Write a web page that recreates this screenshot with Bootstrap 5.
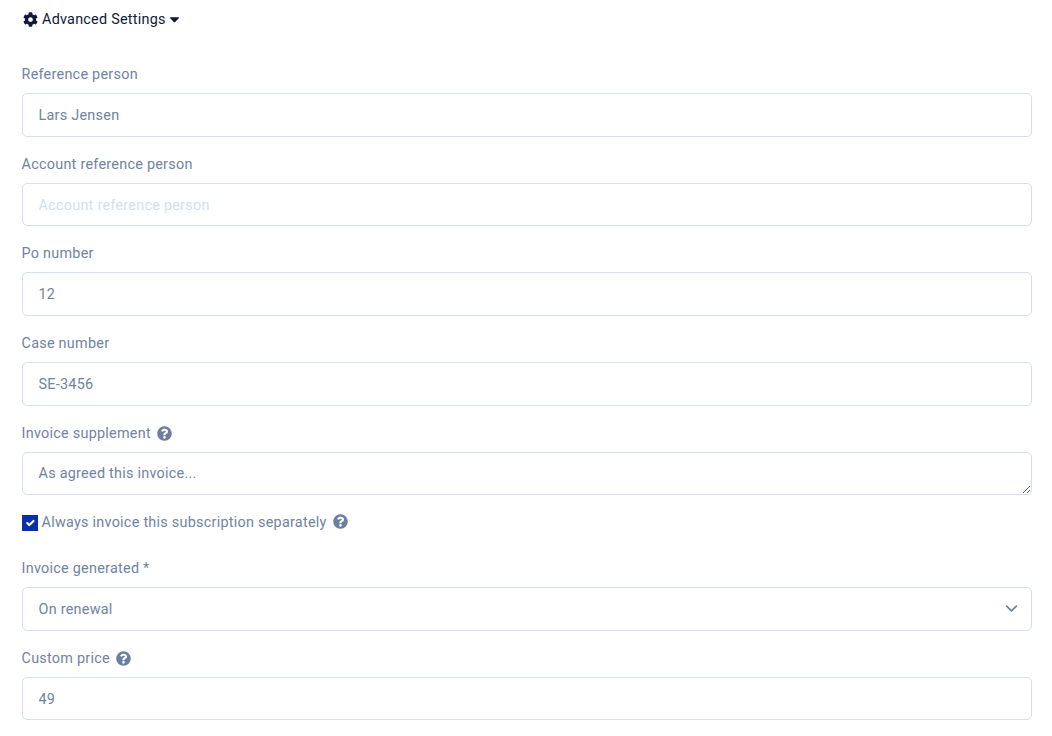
<!DOCTYPE html>
<html lang="en">
<head>
<meta charset="utf-8">
<title>Advanced Settings</title>
<link href="https://cdn.jsdelivr.net/npm/bootstrap@5.3.0/dist/css/bootstrap.min.css" rel="stylesheet">
<style>
html, body { height: 736px; overflow: hidden; }
body { font-family: Roboto, "Liberation Sans", sans-serif; font-size: 14.4px; color: #6f83a3; background: #fff; }
.page-wrap { padding: 9.08px 20px 0 22px; }
.adv-toggle { color: #12193a; font-size: 14.4px; line-height: 21.6px; margin-bottom: 33px; letter-spacing: .24px; }
.adv-toggle svg { display: block; }
.adv-gear { margin-left: .5px; margin-right: 4.500px; margin-top: -1px; }
.adv-caret { margin-left: 4px; }
.field-block { margin-bottom: 16.4px; }
.field-label { color: #6f83a3; font-size: 14.4px; line-height: 21.6px; padding-top: .4px; margin-bottom: 7.6px; margin-left: -.5px; letter-spacing: .26px; column-gap: 6px; }
.field-label.d-flex { padding-top: 1px; margin-bottom: 7px; }
.field-ctl.form-control, .field-ctl.form-select { font-size: 14.4px; line-height: 21.6px; color: #6f83a3; padding: 11px 16px 9px 15.5px; border: 1px solid #d3dfec; border-radius: 5px; letter-spacing: .26px; }
.field-ctl::placeholder { color: #d3dfec; opacity: 1; }
textarea.field-ctl.form-control { min-height: 43.6px; height: 43.6px; display: block; padding-top: 10px; padding-bottom: 10px; }
.field-ctl.form-select { background-image: url("data:image/svg+xml,%3csvg xmlns='http://www.w3.org/2000/svg' viewBox='0 0 16 16'%3e%3cpath fill='none' stroke='%236b7fa0' stroke-linecap='round' stroke-linejoin='round' stroke-width='2' d='m2 5 6 6 6-6'/%3e%3c/svg%3e"); background-size: 13px 13px; background-position: right 13px center; }
.help-icon { color: #6b7fa0; flex: none; }
.check-row { margin-bottom: 24.3px; line-height: 21.6px; letter-spacing: .26px; }
.check-row label { margin-left: 3.5px; }
.check-row .help-icon { margin-left: 6px; margin-bottom: 1px; }
.check-box.form-check-input { width: 16px; height: 16px; margin: 2px 0 0; border-radius: 0; background-color: #0b2fa8; border-color: #0b2fa8; flex: none; }
</style>
</head>
<body>
<div class="page-wrap">
  <div class="adv-toggle d-flex align-items-center">
    <svg class="adv-gear" width="15" height="15" viewBox="0 0 512 512" fill="#12193a"><path d="M487.4 315.7l-42.6-24.6c4.3-23.2 4.3-47 0-70.2l42.6-24.6c4.9-2.8 7.1-8.6 5.5-14-11.1-35.600-30-67.800-54.700-94.600-3.800-4.100-10-5.100-14.800-2.300L380.800 110c-17.900-15.400-38.500-27.300-60.800-35.100V25.800c0-5.600-3.900-10.500-9.400-11.700-36.700-8.200-74.300-7.800-109.200 0-5.500 1.200-9.400 6.100-9.400 11.700V75c-22.200 7.900-42.800 19.800-60.800 35.100L88.700 85.500c-4.900-2.800-11-1.900-14.800 2.300-24.700 26.700-43.600 58.900-54.700 94.600-1.700 5.400.6 11.200 5.500 14L67.300 221c-4.300 23.200-4.300 47 0 70.200l-42.600 24.600c-4.900 2.800-7.100 8.600-5.500 14 11.100 35.600 30 67.800 54.700 94.600 3.800 4.100 10 5.100 14.800 2.300l42.600-24.600c17.900 15.400 38.500 27.300 60.800 35.100v49.200c0 5.600 3.900 10.500 9.400 11.700 36.700 8.200 74.300 7.800 109.200 0 5.500-1.200 9.400-6.100 9.400-11.700v-49.200c22.200-7.900 42.800-19.800 60.800-35.100l42.600 24.600c4.900 2.800 11 1.900 14.800-2.300 24.700-26.700 43.600-58.900 54.700-94.600 1.500-5.500-.7-11.300-5.600-14.100zM256 336c-44.100 0-80-35.900-80-80s35.900-80 80-80 80 35.900 80 80-35.900 80-80 80z"/></svg>
    <span>Advanced Settings</span>
    <svg class="adv-caret" width="9" height="6" viewBox="0 0 10 6" fill="#12193a"><path d="M.7 0h8.600c.6 0 .9.7.5 1.100L5.500 5.400c-.3.3-.7.3-1 0L.2 1.100C-.2.700.1 0 .7 0z"/></svg>
  </div>

  <div class="field-block">
    <label class="field-label d-block" for="f1">Reference person</label>
    <input id="f1" class="form-control field-ctl" value="Lars Jensen">
  </div>
  <div class="field-block">
    <label class="field-label d-block" for="f2">Account reference person</label>
    <input id="f2" class="form-control field-ctl" placeholder="Account reference person">
  </div>
  <div class="field-block">
    <label class="field-label d-block" for="f3">Po number</label>
    <input id="f3" class="form-control field-ctl" value="12">
  </div>
  <div class="field-block">
    <label class="field-label d-block" for="f4">Case number</label>
    <input id="f4" class="form-control field-ctl" value="SE-3456">
  </div>
  <div class="field-block">
    <label class="field-label d-flex align-items-center" for="f5">Invoice supplement
      <svg class="help-icon" width="15" height="15" viewBox="0 0 512 512" fill="currentColor"><path d="M504 256c0 137-111 248-248 248S8 393 8 256 119 8 256 8s248 111 248 248zM262.700 90c-54.500 0-89.300 23-116.500 63.800-3.500 5.300-2.400 12.400 2.700 16.300l34.700 26.300c5.200 3.900 12.600 3 16.700-2.100 17.900-22.700 30.100-35.800 57.300-35.800 20.400 0 45.700 13.100 45.700 32.900 0 15-12.400 22.700-32.600 34-23.600 13.200-54.800 29.700-54.800 70.900V300c0 6.600 5.400 12 12 12h56c6.600 0 12-5.400 12-12v-1.300c0-28.600 83.500-29.800 83.500-107.100C379.400 133.300 319 90 262.700 90zM256 339c-25.500 0-46.200 20.700-46.200 46.200s20.700 46.200 46.200 46.200 46.200-20.700 46.200-46.200S281.500 339 256 339z"/></svg>
    </label>
    <textarea id="f5" class="form-control field-ctl" rows="1">As agreed this invoice...</textarea>
  </div>
  <div class="check-row d-flex align-items-center">
    <input id="f6" type="checkbox" class="form-check-input check-box" checked>
    <label for="f6">Always invoice this subscription separately</label>
    <svg class="help-icon" width="15" height="15" viewBox="0 0 512 512" fill="currentColor"><path d="M504 256c0 137-111 248-248 248S8 393 8 256 119 8 256 8s248 111 248 248zM262.700 90c-54.500 0-89.300 23-116.500 63.800-3.500 5.300-2.400 12.400 2.700 16.300l34.700 26.300c5.200 3.900 12.600 3 16.700-2.100 17.900-22.700 30.100-35.800 57.300-35.800 20.400 0 45.700 13.100 45.700 32.900 0 15-12.400 22.700-32.600 34-23.600 13.200-54.800 29.700-54.800 70.900V300c0 6.600 5.400 12 12 12h56c6.600 0 12-5.400 12-12v-1.300c0-28.600 83.500-29.800 83.500-107.100C379.400 133.300 319 90 262.700 90zM256 339c-25.500 0-46.200 20.700-46.200 46.200s20.700 46.200 46.200 46.200 46.200-20.700 46.200-46.200S281.500 339 256 339z"/></svg>
  </div>
  <div class="field-block">
    <label class="field-label d-block" for="f7">Invoice generated *</label>
    <select id="f7" class="form-select field-ctl"><option>On renewal</option></select>
  </div>
  <div class="field-block">
    <label class="field-label d-flex align-items-center" for="f8">Custom price
      <svg class="help-icon" width="15" height="15" viewBox="0 0 512 512" fill="currentColor"><path d="M504 256c0 137-111 248-248 248S8 393 8 256 119 8 256 8s248 111 248 248zM262.700 90c-54.500 0-89.300 23-116.500 63.800-3.500 5.300-2.400 12.400 2.700 16.300l34.700 26.300c5.200 3.900 12.600 3 16.700-2.100 17.900-22.700 30.100-35.800 57.300-35.800 20.400 0 45.700 13.100 45.700 32.900 0 15-12.400 22.700-32.600 34-23.600 13.200-54.800 29.700-54.800 70.900V300c0 6.600 5.400 12 12 12h56c6.600 0 12-5.400 12-12v-1.300c0-28.600 83.500-29.800 83.500-107.100C379.400 133.300 319 90 262.700 90zM256 339c-25.500 0-46.200 20.700-46.200 46.200s20.700 46.200 46.200 46.200 46.200-20.700 46.200-46.200S281.500 339 256 339z"/></svg>
    </label>
    <input id="f8" class="form-control field-ctl" value="49">
  </div>
</div>
<script src="https://cdn.jsdelivr.net/npm/bootstrap@5.3.0/dist/js/bootstrap.bundle.min.js"></script>
</body>
</html>
